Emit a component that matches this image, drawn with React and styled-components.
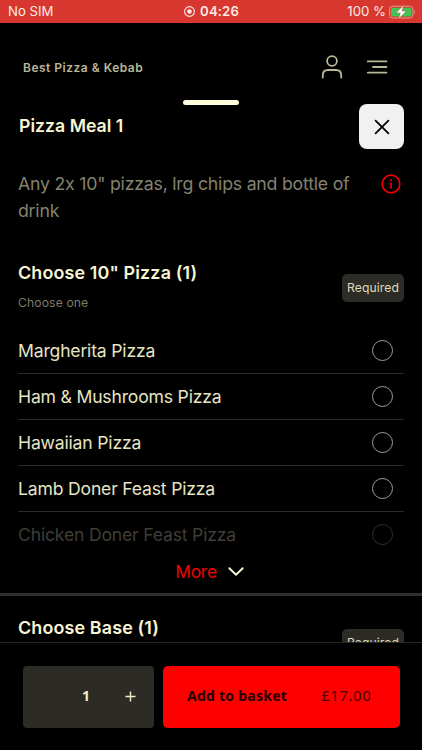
import { useState } from "react";
import styled, { createGlobalStyle } from "styled-components";

const GlobalStyle = createGlobalStyle`
  * {
    box-sizing: border-box;
  }
  body {
    margin: 0;
    background-color: #000;
    font-family: Inter, "Liberation Sans", sans-serif;
    font-feature-settings: "calt" 0;
  }
  button {
    border: none;
    padding: 0;
    background: none;
    color: inherit;
    font-family: inherit;
  }
`;

const Screen = styled.div`
  width: 422px;
  height: 750px;
  display: flex;
  flex-direction: column;
  overflow: hidden;
  background-color: #000;
  color: #f7f5d2;
`;

const StatusBar = styled.div`
  height: 23px;
  flex-shrink: 0;
  display: grid;
  grid-template-columns: 1fr auto 1fr;
  align-items: center;
  padding: 0 6px 0 8px;
  background-color: #d7372f;
  color: #fbe9e6;
  font-size: 13.2px;
  line-height: 23px;
`;

const Clock = styled.div`
  display: flex;
  align-items: center;
  gap: 5px;
  padding-right: 1px;
  font-weight: 600;
  letter-spacing: 0.1px;
`;

const Battery = styled.div`
  display: flex;
  align-items: center;
  justify-content: flex-end;
  gap: 3px;
`;

const Header = styled.header`
  height: 77px;
  flex-shrink: 0;
  display: flex;
  align-items: center;
  padding: 11px 34px 0 23px;
  color: #b9b798;
`;

const Brand = styled.div`
  flex: 1;
  font-size: 12px;
  font-weight: 600;
  letter-spacing: 0.5px;
`;

const HeaderIcons = styled.div`
  display: flex;
  align-items: center;
  gap: 23px;
  svg {
    display: block;
  }
`;

const Handle = styled.div`
  width: 56px;
  height: 5px;
  flex-shrink: 0;
  align-self: center;
  border-radius: 3px;
  background-color: #fffddb;
`;

const Sheet = styled.main`
  flex: 1;
  min-height: 0;
  margin-top: -1px;
  overflow: hidden;
`;

const TitleRow = styled.div`
  height: 45px;
  display: flex;
  justify-content: space-between;
  align-items: center;
  padding: 0 18px 0 19px;
`;

const Title = styled.h2`
  margin: 0;
  font-size: 17.7px;
  line-height: 24px;
  font-weight: 600;
  padding-bottom: 2px;
`;

const GroupTitle = styled.h3`
  margin: 0;
  font-size: 17.9px;
  line-height: 24px;
  font-weight: 600;
  letter-spacing: 0.14px;
`;

const CloseButton = styled.button`
  width: 45px;
  height: 45px;
  display: flex;
  align-items: center;
  justify-content: center;
  border-radius: 8px;
  background-color: #f1f1f1;
`;

const Description = styled.div`
  display: flex;
  justify-content: space-between;
  padding: 21px 21px 0 18px;
  color: #84836f;
  p {
    width: 340px;
    margin: 0;
    font-size: 17.7px;
    line-height: 27px;
    letter-spacing: -0.21px;
  }
  svg {
    margin-top: 4px;
  }
`;

const Group = styled.section`
  padding: ${(props) => props.$top} 18px 0 18px;
`;

const GroupHead = styled.div`
  display: flex;
  justify-content: space-between;
`;

const Hint = styled.div`
  margin-top: 10px;
  font-size: 12.2px;
  line-height: 16px;
  letter-spacing: 0.1px;
  color: #7c7b68;
`;

const Badge = styled.div`
  width: 62px;
  height: 28px;
  margin-top: 12.5px;
  border-radius: 5px;
  background-color: #2c2b26;
  color: #dddbbc;
  font-size: 12.2px;
  line-height: 28px;
  text-align: center;
  letter-spacing: 0.1px;
`;

const Options = styled.div`
  margin-top: 17px;
`;

const Option = styled.div`
  height: 46px;
  display: flex;
  align-items: center;
  justify-content: space-between;
  padding: 0 11px 0 0;
  border-bottom: 1px solid ${(props) => (props.$faded ? "transparent" : "#2b2b29")};
  color: ${(props) => (props.$faded ? "#3f3e36" : "#e6e4c4")};
  font-size: 17.6px;
  letter-spacing: -0.19px;
`;

const Radio = styled.span`
  width: 21px;
  height: 21px;
  border: 1px solid ${(props) => (props.$faded ? "#30302b" : "#a09f8d")};
  border-radius: 50%;
`;

const MoreButton = styled.button`
  width: 100%;
  height: 35px;
  display: flex;
  align-items: center;
  justify-content: center;
  gap: 11px;
  padding: 0 3px 9px 0;
  color: #f20000;
  font-size: 17.4px;
  letter-spacing: -0.2px;
`;

const Divider = styled.div`
  height: 3px;
  background-color: #2e2e2c;
`;

const Footer = styled.footer`
  height: 108px;
  flex-shrink: 0;
  display: flex;
  gap: 9px;
  padding: 22.5px 22.5px 0 23px;
  border-top: 1px solid #272725;
  background-color: #000;
  font-family: "Noto Sans", sans-serif;
`;

const Quantity = styled.div`
  width: 131px;
  height: 62px;
  display: grid;
  grid-template-columns: 39px 48px 40px;
  align-items: center;
  justify-items: center;
  border-radius: 4px;
  background-color: #2c2b26;
  color: #f1eecb;
  font-size: 14px;
  line-height: 20px;
  font-weight: 700;
`;

const Count = styled.span`
  padding-bottom: 2px;
`;

const StepButton = styled.button`
  display: flex;
`;

const BasketButton = styled.button`
  flex: 1;
  height: 62px;
  display: flex;
  align-items: center;
  justify-content: space-between;
  padding: 0 28px 2px 24px;
  border-radius: 5px;
  background-color: #fe0000;
  color: #250000;
  font-size: 14px;
  line-height: 20px;
`;

const BasketLabel = styled.span`
  font-weight: 700;
  letter-spacing: 0.25px;
`;

const Price = styled.span`
  color: #4a0000;
  font-size: 14.4px;
  letter-spacing: 0.85px;
`;

const pizzas = [
  "Margherita Pizza",
  "Ham & Mushrooms Pizza",
  "Hawaiian Pizza",
  "Lamb Doner Feast Pizza",
  "Chicken Doner Feast Pizza",
];

const RecordIcon = () => (
  <svg width="11" height="11" viewBox="0 0 11 11" fill="none">
    <circle cx="5.5" cy="5.5" r="4.9" stroke="currentColor" strokeWidth="1.1" />
    <circle cx="5.5" cy="5.5" r="2.3" fill="currentColor" />
  </svg>
);

const BatteryIcon = () => (
  <svg width="27" height="14" viewBox="0 0 27 14" fill="none">
    <rect x="0.5" y="1.2" width="23.4" height="11.8" rx="3.2" stroke="#e69a90" />
    <rect x="2" y="2.7" width="20.4" height="8.8" rx="1.8" fill="#3fc455" />
    <path d="M25 5.2c1.2.4 1.2 3.4 0 3.8z" fill="#e69a90" />
    <path
      d="M14.6.3 7 7.9h4.3L9.6 13.8l7.7-7.7h-4.4z"
      fill="#fff"
      stroke="#d7372f"
      strokeWidth="0.4"
    />
  </svg>
);

const UserIcon = () => (
  <svg width="22" height="24" viewBox="0 0 22 24" fill="none" stroke="currentColor" strokeWidth="1.8">
    <circle cx="11" cy="6" r="4.9" />
    <path d="M1.8 22.5v-2.2C1.8 17 4 15 7 15h8c3 0 5.2 2 5.2 5.3v2.2" strokeLinecap="round" />
  </svg>
);

const MenuIcon = () => (
  <svg width="22" height="14" viewBox="0 0 22 14" stroke="currentColor" strokeWidth="1.9" strokeLinecap="round">
    <path d="M1.8 1.4h18.6M7 7h13.4M1.8 12.6h18.6" />
  </svg>
);

const CloseIcon = () => (
  <svg width="16" height="16" viewBox="0 0 16 16" stroke="#000" strokeWidth="1.8" strokeLinecap="round">
    <path d="M1.6 1.6l12.8 12.8M14.4 1.6L1.6 14.4" />
  </svg>
);

const InfoIcon = () => (
  <svg width="20" height="20" viewBox="0 0 20 20" fill="none" stroke="#ee0000" strokeWidth="1.7">
    <circle cx="10" cy="10" r="8.8" />
    <path d="M10 8.6v5.8M10 5.3v1.9" />
  </svg>
);

const ChevronIcon = () => (
  <svg width="16" height="9" viewBox="0 0 16 9" fill="none" stroke="#fffddb" strokeWidth="1.9">
    <path d="M1.3 1.2l6.7 6.4 6.7-6.4" strokeLinecap="round" />
  </svg>
);

const PlusIcon = () => (
  <svg width="11" height="11" viewBox="0 0 11 11" stroke="currentColor" strokeWidth="1.4">
    <path d="M5.5.5v10M.5 5.5h10" />
  </svg>
);

const App = () => {
  const [quantity, setQuantity] = useState(1);

  return (
    <Screen>
      <GlobalStyle />
      <StatusBar>
        <span>No SIM</span>
        <Clock>
          <RecordIcon />
          04:26
        </Clock>
        <Battery>
          100 %
          <BatteryIcon />
        </Battery>
      </StatusBar>
      <Header>
        <Brand>Best Pizza &amp; Kebab</Brand>
        <HeaderIcons>
          <UserIcon />
          <MenuIcon />
        </HeaderIcons>
      </Header>
      <Handle />
      <Sheet>
        <TitleRow>
          <Title>Pizza Meal 1</Title>
          <CloseButton>
            <CloseIcon />
          </CloseButton>
        </TitleRow>
        <Description>
          <p>Any 2x 10" pizzas, lrg chips and bottle of drink</p>
          <InfoIcon />
        </Description>
        <Group $top="37px">
          <GroupHead>
            <div>
              <GroupTitle>Choose 10" Pizza (1)</GroupTitle>
              <Hint>Choose one</Hint>
            </div>
            <Badge>Required</Badge>
          </GroupHead>
          <Options>
            {pizzas.map((pizza, i) => {
              const faded = i === pizzas.length - 1;
              return (
                <Option key={pizza} $faded={faded}>
                  {pizza}
                  <Radio $faded={faded} />
                </Option>
              );
            })}
          </Options>
          <MoreButton>
            More
            <ChevronIcon />
          </MoreButton>
        </Group>
        <Divider />
        <Group $top="20px">
          <GroupHead>
            <GroupTitle>Choose Base (1)</GroupTitle>
            <Badge>Required</Badge>
          </GroupHead>
        </Group>
      </Sheet>
      <Footer>
        <Quantity>
          <span />
          <Count>{quantity}</Count>
          <StepButton onClick={() => setQuantity(quantity + 1)}>
            <PlusIcon />
          </StepButton>
        </Quantity>
        <BasketButton>
          <BasketLabel>Add to basket</BasketLabel>
          <Price>£17.00</Price>
        </BasketButton>
      </Footer>
    </Screen>
  );
};

export default App;
